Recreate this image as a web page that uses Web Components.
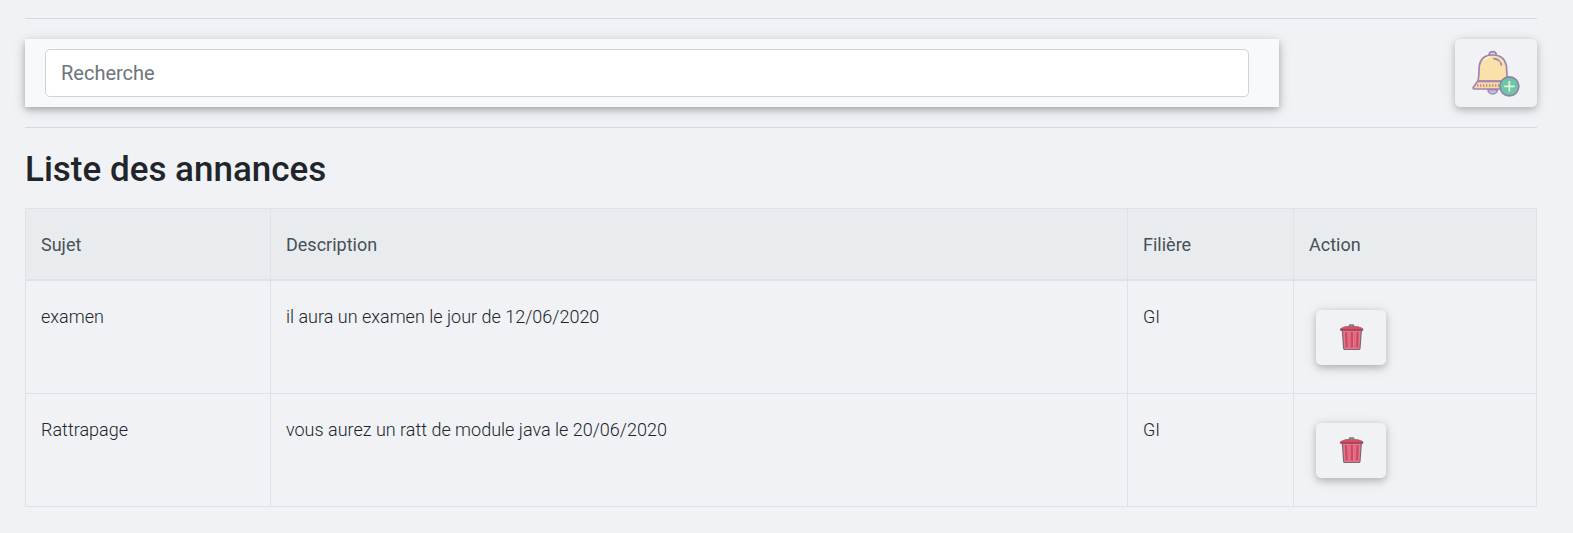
<!DOCTYPE html>
<html lang="fr">
<head>
<meta charset="utf-8">
<title>Liste des annances</title>
<style>
body { margin: 0; background: #f0f2f6; color: #212529; font-family: Roboto, "Liberation Sans", sans-serif; font-size: 20px; }
</style>
</head>
<body>
<annonce-page></annonce-page>
<script>
const define = (name, html) => customElements.define(name, class extends HTMLElement {
  constructor() {
    super();
    this.attachShadow({ mode: 'open' }).innerHTML = html;
  }
});

define('search-card', `
<style>
:host { display: block; box-sizing: border-box; width: 1254px; height: 68px; padding: 10px 30px 10px 20px; background: #f8f9fb; box-shadow: 0 2.5px 6.25px rgba(0,0,0,.22), 0 2.5px 12.5px rgba(0,0,0,.16); }
input { display: block; box-sizing: border-box; width: 100%; height: 48px; padding: 0 15px; border: 1px solid #ced4da; border-radius: 5px; background: #fff; font: 400 20px/30px Roboto, "Liberation Sans", sans-serif; color: #495057; outline: 0; }
input::placeholder { color: #6c757d; opacity: 1; }
</style>
<input type="text" placeholder="Recherche">`);

define('raised-button', `
<style>
:host { display: inline-flex; }
button { display: flex; align-items: center; justify-content: center; width: var(--w, 70px); height: var(--h, 55px); padding: 0; border: 0; border-radius: 5px; background: #f0f2f6; box-shadow: 0 2.5px 6.25px rgba(0,0,0,.17), 0 2.5px 12.5px rgba(0,0,0,.12); }
</style>
<button><slot></slot></button>`);

define('bell-icon', `
<style>:host, svg { display: block; width: 48px; height: 48px; }</style>
<svg viewBox="96 72 144 144" stroke-linecap="round" stroke-linejoin="round">
  <path d="M144 194a14 13 0 0 0 28 0z" fill="#b9c4e2" stroke="#a688b5" stroke-width="5"/>
  <path d="M147 91q0-11 11-11t11 11" fill="#ddd0df" stroke="#a083b2" stroke-width="5"/>
  <path d="M114 168c4-14 2-30 4-46 3-22 19-32 40-32s37 10 41 32c2 16 1 32 5 46z" fill="#fae1a9" stroke="#a083b2" stroke-width="5"/>
  <path d="M113 169h91l8 23H103q-5 0-3-5z" fill="#fad8a0" stroke="#a083b2" stroke-width="5"/>
  <path d="M134 104q6-7 15-8" fill="none" stroke="#fff0cc" stroke-width="5"/>
  <path d="M162 101q10 1 16 7M182 113l2 7" fill="none" stroke="#a083b2" stroke-width="5"/>
  <path d="M113 178v7M122 178v7M131 178v7M140 178v7M149 178v7M158 178v7M167 178v7M176 178v7" stroke="#b18e9f" stroke-width="4" stroke-linecap="butt"/>
  <circle cx="208" cy="184" r="28.5" fill="#6cc6a8" stroke="#9183a5" stroke-width="5"/>
  <path d="M208 170v28M194 184h28" stroke="#e6f2dc" stroke-width="5"/>
</svg>`);

define('trash-icon', `
<style>:host, svg { display: block; width: 30px; height: 30px; }</style>
<svg viewBox="108 82.5 90 90" stroke-linejoin="round">
  <path d="M148 93v-5h13v5" fill="#9b9da5" stroke="#6b6d77" stroke-width="3"/>
  <path d="M127 104h57l-4 54q0 4-4 4h-41q-4 0-4-4z" fill="#ee748c" stroke="#786673" stroke-width="3.5"/>
  <path d="M138 110l2 46M155.500 109v48M173 110l-2 46" stroke="#c24e65" stroke-width="7"/>
  <path d="M147 109v48M164 109v48" stroke="#dc6078" stroke-width="3"/>
  <path d="M121 104q-1-6 6-7l8-3q20-4 40 0l8 3q7 1 6 7z" fill="#d94f62" stroke="#95606b" stroke-width="2.500"/>
  <path d="M122 103h66" stroke="#a84456" stroke-width="5"/>
</svg>`);

define('annonce-head', `
<style>
:host { display: grid; grid-template-columns: var(--cols); height: 70px; background: #e8ecef; color: #495057; font-size: 18px; line-height: 27px; border-bottom: 2px solid #dee2e6; }
div { padding: 22px 0 0 15px; border-left: 1px solid #dee2e6; }
</style>
<div>Sujet</div><div>Description</div><div>Filière</div><div>Action</div>`);

define('annonce-row', `
<style>
:host { display: grid; grid-template-columns: var(--cols); height: 112px; font-size: 18px; font-weight: 300; line-height: 27px; border-bottom: 1px solid #dee2e6; }
div { padding: 22px 0 0 15px; border-left: 1px solid #dee2e6; }
.action { padding: 29px 0 0 22px; }
</style>
<div><slot name="sujet"></slot></div>
<div><slot name="description"></slot></div>
<div><slot name="filiere"></slot></div>
<div class="action"><raised-button><trash-icon></trash-icon></raised-button></div>`);

define('annonce-table', `
<style>
:host { --cols: 245px 857px 166px 1fr; display: block; border: solid #dee2e6; border-width: 1px 1px 0 0; }
</style>
<annonce-head></annonce-head>
<slot></slot>`);

define('annonce-page', `
<style>
:host { display: block; padding: 18px 36px 0 25px; }
hr { height: 1px; margin: 0; border: 0; background: #d7d9de; }
.bar { display: flex; justify-content: space-between; margin: 20px 0; }
.bar raised-button { --w: 82px; --h: 68px; }
h2 { margin: 20px 0 17px; font-size: 35px; line-height: 43px; font-weight: 500; color: #212529; }
</style>
<hr>
<div class="bar"><search-card></search-card><raised-button><bell-icon></bell-icon></raised-button></div>
<hr>
<h2>Liste des annances</h2>
<annonce-table>
  <annonce-row>
    <span slot="sujet">examen</span>
    <span slot="description">il aura un examen le jour de 12/06/2020</span>
    <span slot="filiere">GI</span>
  </annonce-row>
  <annonce-row>
    <span slot="sujet">Rattrapage</span>
    <span slot="description">vous aurez un ratt de module java le 20/06/2020</span>
    <span slot="filiere">GI</span>
  </annonce-row>
</annonce-table>`);
</script>
</body>
</html>
